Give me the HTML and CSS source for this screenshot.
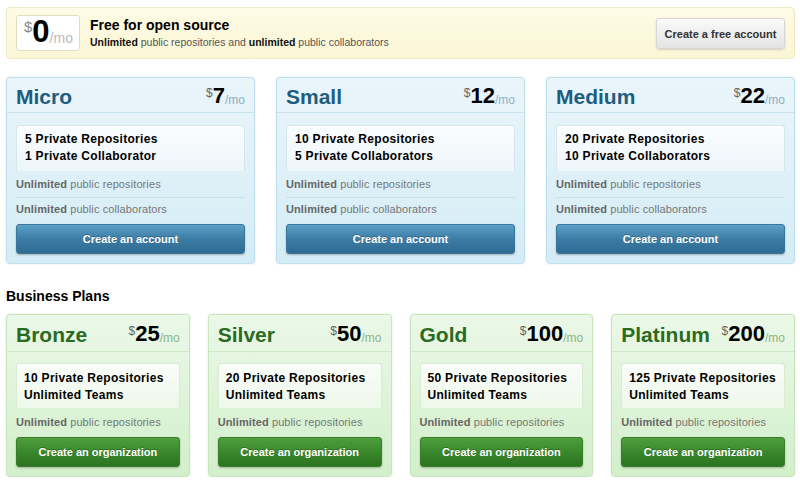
FILE: index.html
```html
<!DOCTYPE html>
<html>
<head>
<meta charset="utf-8">
<link rel="stylesheet" href="styles.css">
</head>
<body>
<div class="page">
  <div class="free">
    <div class="free-price"><span class="cur">$</span><span class="amt">0</span><span class="per">/mo</span></div>
    <div class="free-text">
      <div class="free-title">Free for open source</div>
      <div class="free-sub"><b>Unlimited</b> public repositories and <b>unlimited</b> public collaborators</div>
    </div>
    <a class="btn-light">Create a free account</a>
  </div>

  <div class="plans personal">
    <div class="card blue">
      <div class="card-head"><span class="name">Micro</span><span class="price"><span class="cur">$</span><span class="amt">7</span><span class="per">/mo</span></span></div>
      <div class="features"><div>5 Private Repositories</div><div>1 Private Collaborator</div></div>
      <div class="extra"><b>Unlimited</b> public repositories</div>
      <div class="extra last"><b>Unlimited</b> public collaborators</div>
      <a class="btn btn-blue">Create an account</a>
    </div>
    <div class="card blue">
      <div class="card-head"><span class="name">Small</span><span class="price"><span class="cur">$</span><span class="amt">12</span><span class="per">/mo</span></span></div>
      <div class="features"><div>10 Private Repositories</div><div>5 Private Collaborators</div></div>
      <div class="extra"><b>Unlimited</b> public repositories</div>
      <div class="extra last"><b>Unlimited</b> public collaborators</div>
      <a class="btn btn-blue">Create an account</a>
    </div>
    <div class="card blue">
      <div class="card-head"><span class="name">Medium</span><span class="price"><span class="cur">$</span><span class="amt">22</span><span class="per">/mo</span></span></div>
      <div class="features"><div>20 Private Repositories</div><div>10 Private Collaborators</div></div>
      <div class="extra"><b>Unlimited</b> public repositories</div>
      <div class="extra last"><b>Unlimited</b> public collaborators</div>
      <a class="btn btn-blue">Create an account</a>
    </div>
  </div>

  <h2 class="section">Business Plans</h2>

  <div class="plans business">
    <div class="card green">
      <div class="card-head"><span class="name">Bronze</span><span class="price"><span class="cur">$</span><span class="amt">25</span><span class="per">/mo</span></span></div>
      <div class="features"><div>10 Private Repositories</div><div>Unlimited Teams</div></div>
      <div class="extra last"><b>Unlimited</b> public repositories</div>
      <a class="btn btn-green">Create an organization</a>
    </div>
    <div class="card green">
      <div class="card-head"><span class="name">Silver</span><span class="price"><span class="cur">$</span><span class="amt">50</span><span class="per">/mo</span></span></div>
      <div class="features"><div>20 Private Repositories</div><div>Unlimited Teams</div></div>
      <div class="extra last"><b>Unlimited</b> public repositories</div>
      <a class="btn btn-green">Create an organization</a>
    </div>
    <div class="card green">
      <div class="card-head"><span class="name">Gold</span><span class="price"><span class="cur">$</span><span class="amt">100</span><span class="per">/mo</span></span></div>
      <div class="features"><div>50 Private Repositories</div><div>Unlimited Teams</div></div>
      <div class="extra last"><b>Unlimited</b> public repositories</div>
      <a class="btn btn-green">Create an organization</a>
    </div>
    <div class="card green">
      <div class="card-head"><span class="name">Platinum</span><span class="price"><span class="cur">$</span><span class="amt">200</span><span class="per">/mo</span></span></div>
      <div class="features"><div>125 Private Repositories</div><div>Unlimited Teams</div></div>
      <div class="extra last"><b>Unlimited</b> public repositories</div>
      <a class="btn btn-green">Create an organization</a>
    </div>
  </div>
</div>
</body>
</html>
```

FILE: styles.css
```css
* { box-sizing: border-box; }
html, body { margin: 0; padding: 0; background: #fff; }
body { font-family: "Liberation Sans", Arial, sans-serif; color: #000; }
.page { width: 789px; margin: 7px 0 0 6px; }

.free {
  height: 52px;
  display: flex;
  align-items: center;
  padding: 0 9px 0 9px;
  border: 1px solid #efe8c4;
  border-radius: 4px;
  background: linear-gradient(#fefbe6, #fbf6d6);
}
.free-price {
  width: 64px; height: 36px;
  background: #fff;
  border: 1px solid #e2dcc0;
  border-radius: 3px;
  display: flex; align-items: flex-end;
  padding: 0 0 4px 7px;
  line-height: 1;
}
.free-price .cur { font-size: 15px; color: #888; align-self: flex-start; margin-top: 3px; }
.free-price .amt { font-size: 31px; font-weight: bold; letter-spacing: -1px; margin-bottom: -1px; }
.free-price .per { font-size: 14px; color: #bbb; margin-left: 1px; margin-bottom: 1px; }
.free-text { margin-left: 10px; flex: 1; }
.free-title { font-size: 14px; font-weight: bold; line-height: 17px; margin-top: 1px; }
.free-sub { font-size: 10.5px; color: #555; line-height: 15px; margin-top: 1px; }
.free-sub b { color: #111; }
.btn-light {
  width: 129px; height: 31px;
  display: flex; align-items: center; justify-content: center;
  font-size: 11px; font-weight: bold; color: #333;
  background: linear-gradient(#fafafa, #e4e4e4);
  border: 1px solid #d6d6d6;
  border-radius: 3px;
  box-shadow: 0 1px 2px rgba(0,0,0,0.15);
  margin-top: 1px;
}

.plans { display: grid; }
.personal { grid-template-columns: repeat(3, 1fr); gap: 21px; margin-top: 18px; }
.business { grid-template-columns: repeat(4, 1fr); gap: 18px; }

.card {
  border: 1px solid #b9dceb;
  border-radius: 4px;
  padding: 0 9px 9px 9px;
  display: flex; flex-direction: column;
}
.card.blue {
  background: linear-gradient(#eaf5fa, #d4ecf5);
  border-color: #bedfec;
  box-shadow: 0 0 2px rgba(120,180,210,0.35);
}
.card.green {
  background: linear-gradient(#ebf8e8, #d2efca);
  border-color: #c7e6be;
  box-shadow: 0 0 2px rgba(120,190,110,0.35);
}
.card-head {
  display: flex; justify-content: space-between; align-items: flex-start;
  margin: 0 -9px;
  padding: 0 9px;
  height: 35px;
  border-bottom: 1px solid #c8e2ee;
}
.green .card-head { height: 37px; border-bottom-color: #cfe8c8; }
.name { font-size: 21px; font-weight: bold; line-height: 1; margin-top: 8px; }
.blue .name { color: #1e5d80; }
.green .name { color: #2a6b1f; margin-top: 9px; }
.price { line-height: 1; margin-top: 7px; display: flex; align-items: flex-start; }
.green .price { margin-top: 8px; }
.price .cur { font-size: 12px; color: #666; margin-top: 2px; }
.price .amt { font-size: 22px; font-weight: bold; }
.price .per { font-size: 12px; align-self: flex-end; margin-bottom: 1px; }
.blue .price .per { color: #8fb0c2; }
.green .price .per { color: #8db584; }

.features {
  margin-top: 12px;
  height: 46px;
  padding: 5px 6px 0 8px;
  border: 1px solid #d5e6ee;
  border-bottom: none;
  border-radius: 3px 3px 0 0;
  background: linear-gradient(#fafcfd, #eef6fa);
  font-size: 12px; font-weight: bold; letter-spacing: 0.3px;
  line-height: 17px;
  white-space: nowrap;
}
.green .features {
  margin-top: 11px;
  border-color: #d8ecd2;
  background: linear-gradient(#fafdf9, #eef8eb);
  height: 45px;
  padding-left: 7px;
  padding-top: 6px;
}
.extra {
  font-size: 11px; color: #777;
  border-bottom: 1px solid #c9e1eb;
  letter-spacing: 0.1px;
  white-space: nowrap;
}
.blue .extra:not(.last) { line-height: 26px; }
.extra b { color: #666; }
.extra.last { border-bottom: none; }
.blue .extra.last { line-height: 22px; margin-bottom: 4px; }
.green .extra.last { line-height: 29px; }

.btn {
  height: 30px;
  display: flex; align-items: center; justify-content: center;
  font-size: 11px; font-weight: bold; color: #fff;
  border-radius: 3px;
  text-shadow: 0 -1px 0 rgba(0,0,0,0.25);
  box-shadow: 0 1px 2px rgba(0,0,0,0.25);
}
.btn-blue { background: linear-gradient(#5b9ec6, #3a7aa2 55%, #2f6b92); border: 1px solid #3a759a; }
.btn-green { background: linear-gradient(#4e9e3c, #38862a 55%, #2c7420); border: 1px solid #3a7e2c; }

.section { font-size: 14px; font-weight: bold; margin: 0; padding: 0; line-height: 17px; margin-top: 24px; margin-bottom: 9px; }
```
